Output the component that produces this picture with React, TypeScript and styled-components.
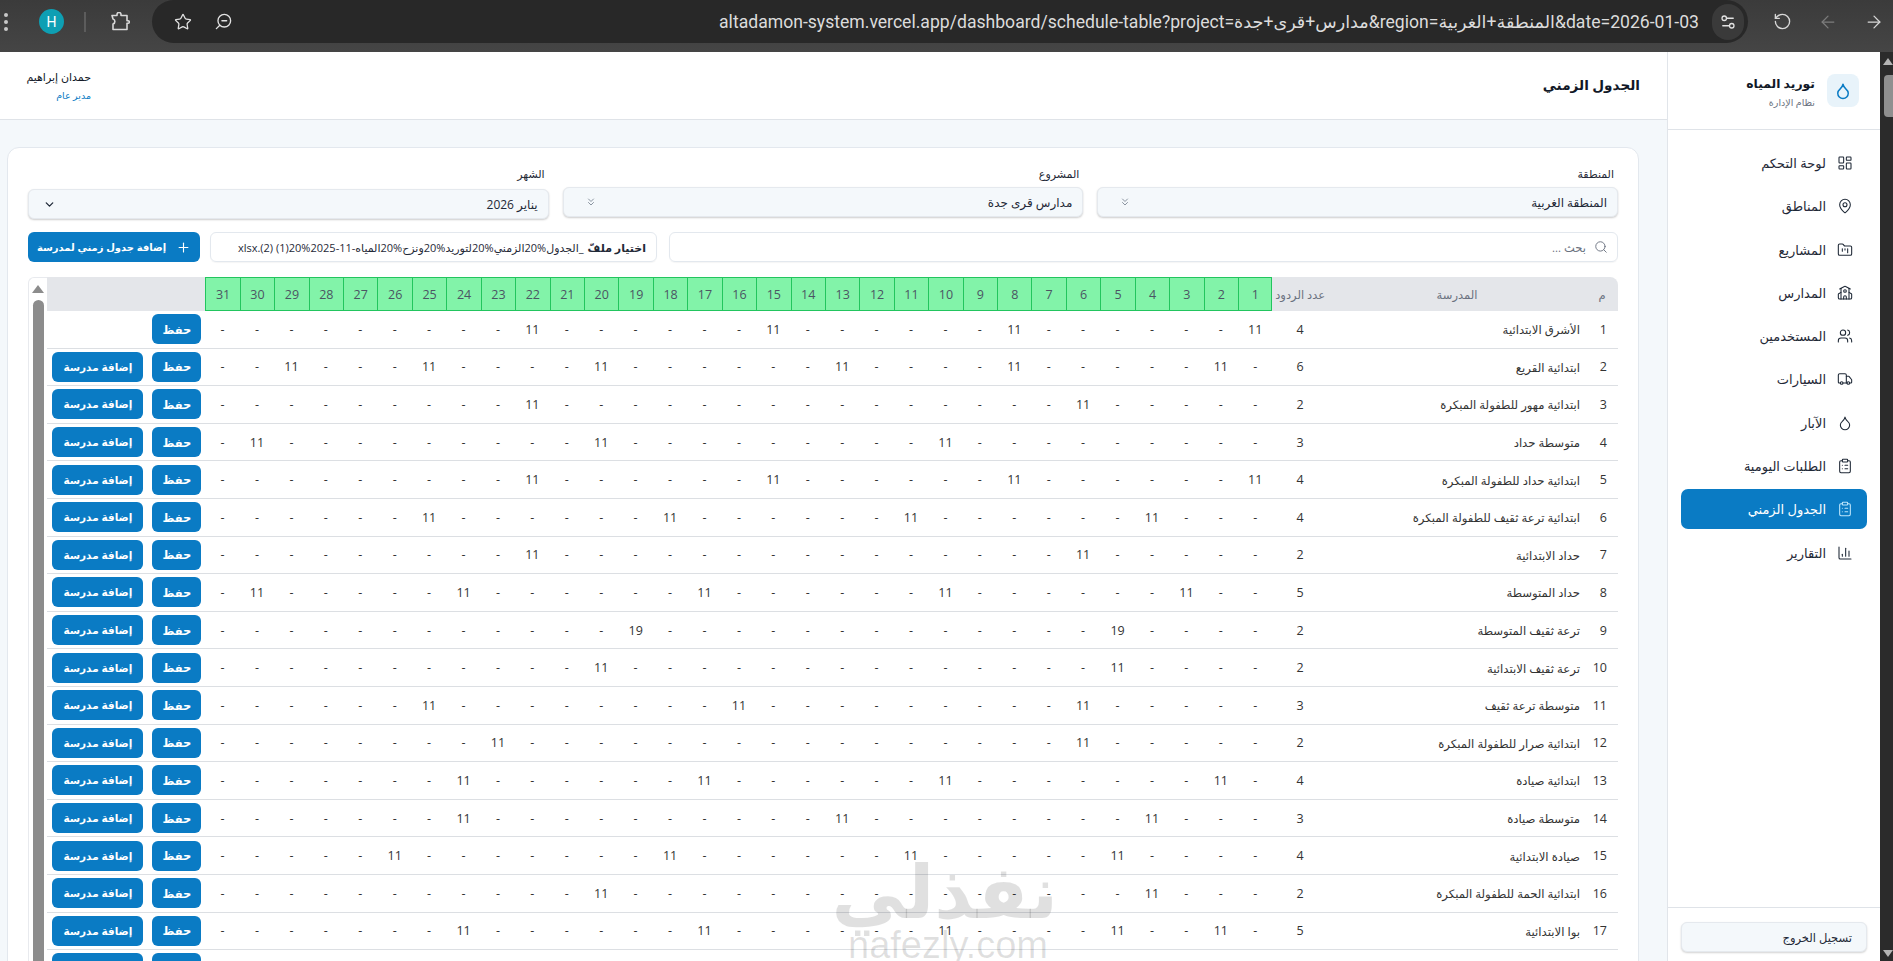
import * as React from 'react'
import styled, { createGlobalStyle } from 'styled-components'
import {
  ArrowLeft,
  ArrowRight,
  ChartColumn,
  ChevronDown,
  ChevronsDown,
  ClipboardList,
  Droplet,
  FolderKanban,
  LayoutDashboard,
  MapPin,
  Plus,
  RotateCcw,
  School,
  Search,
  Settings2,
  Star,
  Truck,
  Users,
  ZoomOut,
} from 'lucide-react'

const URL_TEXT =
  'altadamon-system.vercel.app/dashboard/schedule-table?project=مدارس+قرى+جدة&region=المنطقة+الغربية&date=2026-01-03'

const NAV = [
  { label: 'لوحة التحكم', icon: LayoutDashboard },
  { label: 'المناطق', icon: MapPin },
  { label: 'المشاريع', icon: FolderKanban },
  { label: 'المدارس', icon: School },
  { label: 'المستخدمين', icon: Users },
  { label: 'السيارات', icon: Truck },
  { label: 'الآبار', icon: Droplet },
  { label: 'الطلبات اليومية', icon: ClipboardList },
  { label: 'الجدول الزمني', icon: ClipboardList, active: true },
  { label: 'التقارير', icon: ChartColumn },
]

const DAYS = Array.from({ length: 31 }, (_, i) => i + 1)

const ROWS: { name: string; days: Record<number, number> }[] = [
  { name: 'الأشرق الابتدائية', days: { 1: 11, 8: 11, 15: 11, 22: 11 } },
  { name: 'ابتدائية القريع', days: { 2: 11, 8: 11, 13: 11, 20: 11, 25: 11, 29: 11 } },
  { name: 'ابتدائية مهور للطفولة المبكرة', days: { 6: 11, 22: 11 } },
  { name: 'متوسطة حداد', days: { 10: 11, 20: 11, 30: 11 } },
  { name: 'ابتدائية حداد للطفولة المبكرة', days: { 1: 11, 8: 11, 15: 11, 22: 11 } },
  { name: 'ابتدائية ترعة ثقيف للطفولة المبكرة', days: { 4: 11, 11: 11, 18: 11, 25: 11 } },
  { name: 'حداد الابتدائية', days: { 6: 11, 22: 11 } },
  { name: 'حداد المتوسطة', days: { 3: 11, 10: 11, 17: 11, 24: 11, 30: 11 } },
  { name: 'ترعة ثقيف المتوسطة', days: { 5: 19, 19: 19 } },
  { name: 'ترعة ثقيف الابتدائية', days: { 5: 11, 20: 11 } },
  { name: 'متوسطة ترعة ثقيف', days: { 6: 11, 16: 11, 25: 11 } },
  { name: 'ابتدائية صرار للطفولة المبكرة', days: { 6: 11, 23: 11 } },
  { name: 'ابتدائية صيادة', days: { 2: 11, 10: 11, 17: 11, 24: 11 } },
  { name: 'متوسطة صيادة', days: { 4: 11, 13: 11, 24: 11 } },
  { name: 'صيادة الابتدائية', days: { 5: 11, 11: 11, 18: 11, 26: 11 } },
  { name: 'ابتدائية الحمة للطفولة المبكرة', days: { 4: 11, 20: 11 } },
  { name: 'بوا الابتدائية', days: { 2: 11, 5: 11, 10: 11, 17: 11, 24: 11 } },
  { name: '', days: {} },
]

const GlobalStyle = createGlobalStyle`
  html, body {
    margin: 0;
    height: 100%;
    overflow: hidden;
    background: #f4f8fb;
  }
  * {
    box-sizing: border-box;
  }
  body {
    font-family: 'Open Sans', 'DejaVu Sans', sans-serif;
    color: #1f2937;
  }
`

const Screen = styled.div`
  height: 961px;
  display: flex;
  flex-direction: column;
  position: relative;
  overflow: hidden;
`

/* browser chrome */

const BrowserBar = styled.div`
  height: 52px;
  flex: none;
  direction: ltr;
  display: flex;
  align-items: flex-start;
  background: linear-gradient(#3b3b3b, #454545);
  color: #d8d8d8;
`

const ChromeLeft = styled.div`
  width: 152px;
  height: 43px;
  flex: none;
  display: flex;
  align-items: center;
`

const MenuDots = styled.div`
  width: 4px;
  margin-left: 4px;
  display: flex;
  flex-direction: column;
  gap: 3px;

  i {
    width: 4px;
    height: 4px;
    border-radius: 50%;
    background: #c8c8c8;
  }
`

const Avatar = styled.div`
  width: 25px;
  height: 25px;
  margin-left: 31px;
  border-radius: 50%;
  background: #0e9fb3;
  color: #fff;
  font: 400 14px Roboto, sans-serif;
  display: flex;
  align-items: center;
  justify-content: center;
`

const ChromeSep = styled.div`
  width: 2px;
  height: 20px;
  margin-left: 20px;
  background: #5c5c5c;
`

const PuzzleIcon = styled.svg`
  margin-left: 24px;
`

const Omnibox = styled.div`
  width: 1596px;
  height: 43px;
  flex: none;
  display: flex;
  align-items: center;
  background: #282828;
  border-radius: 22px;
  padding: 0 4px 0 22px;
`

const OmniIcons = styled.div`
  display: flex;
  align-items: center;
  gap: 22px;
  color: #e2e2e2;
`

const UrlText = styled.div`
  flex: 1;
  text-align: right;
  font: 400 17.6px Roboto, 'DejaVu Sans', sans-serif;
  color: #dcdcdc;
  white-space: nowrap;
  padding-right: 13px;
  direction: ltr;
`

const SiteButton = styled.div`
  width: 32px;
  height: 36px;
  border-radius: 18px;
  background: #3a3a3a;
  display: flex;
  align-items: center;
  justify-content: center;
  color: #e2e2e2;
`

const NavIcons = styled.div`
  flex: 1;
  height: 43px;
  display: flex;
  align-items: center;
  padding-left: 25px;
  gap: 26px;
`

/* page */

const Viewport = styled.div`
  flex: 1;
  min-height: 0;
  display: flex;
  direction: ltr;
`

const PageScrollbar = styled.div`
  width: 13px;
  flex: none;
  background: #2b2b2b;
  display: flex;
  flex-direction: column;
  align-items: flex-end;
  padding-top: 6px;
`

const ArrowUp = styled.div<{ $color: string }>`
  width: 0;
  height: 0;
  border-left: 5px solid transparent;
  border-right: 5px solid transparent;
  border-bottom: 7px solid ${(p) => p.$color};
`

const ArrowDown = styled(ArrowUp)`
  border-bottom: 0;
  border-top: 7px solid ${(p) => p.$color};
  margin-top: auto;
  margin-bottom: 4px;
`

const PageThumb = styled.div`
  width: 9px;
  height: 42px;
  margin-top: 10px;
  border-radius: 4px 0 0 4px;
  background: #8f8f8f;
`

const Page = styled.div`
  flex: 1;
  min-width: 0;
  display: flex;
  direction: rtl;
`

const Sidebar = styled.aside`
  width: 213px;
  flex: none;
  background: #fff;
  border-left: 1px solid #e1e5ea;
  display: flex;
  flex-direction: column;
`

const Brand = styled.div`
  height: 78px;
  flex: none;
  display: flex;
  align-items: flex-start;
  gap: 12px;
  padding: 22px 21px 0 0;
  border-bottom: 1px solid #dfe3e8;
`

const BrandMark = styled.div`
  width: 32px;
  height: 33px;
  border-radius: 8px;
  background: #e8f3fa;
  color: #0a7bc4;
  display: flex;
  align-items: center;
  justify-content: center;
`

const BrandTitle = styled.div`
  font-size: 12.4px;
  font-weight: 700;
  line-height: 20px;
  color: #111827;
  white-space: nowrap;
`

const BrandSub = styled.div`
  font-size: 9.5px;
  line-height: 13px;
  margin-top: 2px;
  color: #6b7280;
`

const Nav = styled.nav`
  flex: 1;
  padding: 13px 13px 0 13px;
  display: flex;
  flex-direction: column;
  gap: 3.3px;
`

const NavItem = styled.div<{ $active?: boolean }>`
  height: 40px;
  display: flex;
  align-items: center;
  gap: 11px;
  padding: 0 14px;
  border-radius: 7px;
  font-size: 13px;
  font-weight: 500;
  white-space: nowrap;
  background: ${(p) => (p.$active ? '#0a7bc4' : 'transparent')};
  color: ${(p) => (p.$active ? '#fff' : '#1f2937')};

  svg {
    color: ${(p) => (p.$active ? '#bfe6fb' : '#1f2937')};
  }
`

const SideFooter = styled.div`
  height: 54px;
  flex: none;
  padding: 14px 13px 0;
  border-top: 1px solid #dfe3e8;
`

const LogoutButton = styled.div`
  height: 30px;
  padding: 0 14px;
  display: flex;
  align-items: center;
  font-size: 11.5px;
  font-weight: 500;
  color: #1f2937;
  background: #f4f8fb;
  border: 1px solid #e5e9ee;
  border-radius: 6px;
  box-shadow: 0 1px 2px rgba(0, 0, 0, 0.18);
`

const Main = styled.main`
  flex: 1;
  min-width: 0;
  display: flex;
  flex-direction: column;
`

const TopBar = styled.header`
  height: 68px;
  flex: none;
  background: #fff;
  border-bottom: 1px solid #dfe3e8;
  display: flex;
  align-items: center;
  justify-content: space-between;
  padding: 0 27px 0 26px;
`

const PageTitle = styled.h1`
  margin: 0 0 2px;
  font-size: 13.6px;
  font-weight: 700;
  color: #111827;
`

const UserBlock = styled.div`
  width: 65px;
  white-space: nowrap;
`

const UserName = styled.div`
  font-size: 11px;
  font-weight: 500;
  line-height: 16px;
  color: #111827;
`

const UserRole = styled.div`
  font-size: 9.5px;
  line-height: 13px;
  margin-top: 4px;
  color: #0a7bc4;
`

const Content = styled.div`
  flex: 1;
  min-height: 0;
  padding: 27px 28px 0 7px;
`

const Card = styled.section`
  background: #fff;
  border: 1px solid #e3e8ee;
  border-radius: 12px;
  padding: 17px 20px 20px;
`

const Filters = styled.div`
  display: grid;
  grid-template-columns: repeat(3, 1fr);
  gap: 14px;
`

const Field = styled.div`
  min-width: 0;
`

const FieldLabel = styled.div`
  height: 20px;
  padding-right: 4px;
  font-size: 11px;
  font-weight: 500;
  line-height: 18px;
  color: #1f2937;
`

const SelectBox = styled.div<{ $native?: boolean }>`
  height: 30px;
  margin-top: ${(p) => (p.$native ? '4px' : '2px')};
  padding: 0 10px 0 ${(p) => (p.$native ? '14px' : '21px')};
  display: flex;
  align-items: center;
  justify-content: space-between;
  font-size: 12px;
  font-weight: 500;
  color: #1f2937;
  background: #f4f8fb;
  border: 1px solid #e5e9ee;
  border-radius: 6px;
  box-shadow: 0 1px 2px rgba(0, 0, 0, 0.2);

  svg {
    color: ${(p) => (p.$native ? '#1f2937' : '#8a94a0')};
  }
`

const Toolbar = styled.div`
  margin-top: 13px;
  display: flex;
  height: 30px;
`

const SearchBox = styled.div`
  flex: 1;
  margin-left: 12px;
  display: flex;
  align-items: center;
  gap: 8px;
  padding: 0 9px;
  border: 1px solid #e3e8ee;
  border-radius: 6px;
  box-shadow: 0 1px 1px rgba(0, 0, 0, 0.04);
  font-size: 11.5px;
  color: #6b7280;

  svg {
    color: #6b7280;
  }
`

const FileBox = styled.div`
  width: 447px;
  flex: none;
  margin-left: 10px;
  display: flex;
  align-items: center;
  gap: 4px;
  padding: 0 10px;
  border: 1px solid #e3e8ee;
  border-radius: 6px;
  box-shadow: 0 1px 1px rgba(0, 0, 0, 0.04);
  font-size: 11px;
  white-space: nowrap;
  overflow: hidden;
  color: #1f2937;
`

const FileButton = styled.span`
  font-weight: 700;
`

const PrimaryButton = styled.div`
  flex: none;
  background: #0a7bc4;
  color: #fff;
  font-size: 10.5px;
  font-weight: 700;
  border-radius: 6px;
  display: flex;
  align-items: center;
  justify-content: center;
  white-space: nowrap;
`

const AddScheduleButton = styled(PrimaryButton)`
  width: 172px;
  gap: 10px;
  font-size: 10px;
`

const SaveButton = styled(PrimaryButton)`
  width: 49px;
  height: 30px;
  font-size: 11.5px;
`

const AddSchoolButton = styled(PrimaryButton)`
  width: 91px;
  height: 30px;
`

const TableFrame = styled.div`
  margin-top: 15px;
  display: flex;
  align-items: flex-start;
  direction: ltr;
  border-radius: 8px 8px 0 0;
`

const TableScrollbar = styled.div`
  width: 19px;
  flex: none;
  border: 1px solid #e8eaee;
  border-right: 0;
  border-bottom: 0;
  border-radius: 6px 0 0 0;
  padding: 7px 0 0 4px;
  display: flex;
  flex-direction: column;
  align-items: center;
`

const TableArrow = styled.div`
  width: 0;
  height: 0;
  margin-right: 4px;
  border-left: 6px solid transparent;
  border-right: 6px solid transparent;
  border-bottom: 8px solid #8c8c8c;
`

const TableThumb = styled.div`
  width: 11px;
  height: 700px;
  margin: 7px 4px 0 0;
  border-radius: 6px;
  background: #8c8c8c;
`

const ScheduleTable = styled.table`
  width: 1571px;
  flex: none;
  direction: rtl;
  table-layout: fixed;
  border-collapse: separate;
  border-spacing: 0;
  font-size: 12.5px;
  color: #333;
`

const HeadCell = styled.th`
  height: 34px;
  padding: 0;
  background: #e4e6ea;
  color: #6b7280;
  font-size: 11.5px;
  font-weight: 400;
  text-align: center;
  white-space: nowrap;

  &:first-child {
    border-top-right-radius: 8px;
  }
`

const DayHead = styled.th`
  height: 34px;
  padding: 0;
  background: #82f3a9;
  border: 1px solid #22c55e;
  border-right-width: 0;
  color: #4b5563;
  font-size: 12.5px;
  font-weight: 400;
  text-align: center;

  &[data-first='true'] {
    border-right-width: 1px;
  }
`

const Cell = styled.td`
  height: 37.6px;
  padding: 0;
  border-bottom: 1px solid #dcdfe3;
  text-align: center;
`

const IndexCell = styled(Cell)`
  text-align: right;
  padding-right: 11px;
`

const NameCell = styled(Cell)`
  text-align: right;
  padding-right: 6px;
  font-size: 11.7px;
  white-space: nowrap;
`

const Actions = styled.div`
  display: flex;
  gap: 9px;
  padding-right: 4px;
`

const Watermark = styled.div`
  position: absolute;
  left: 838px;
  top: 844px;
  width: 220px;
  text-align: center;
  direction: rtl;
  color: rgba(0, 0, 0, 0.12);
  pointer-events: none;
`

const WatermarkArabic = styled.div`
  font-size: 74px;
  font-weight: 700;
  line-height: 92px;
  white-space: nowrap;
`

const WatermarkLatin = styled.div`
  direction: ltr;
  margin-top: -12px;
  font: 400 38px 'Liberation Sans', sans-serif;
  white-space: nowrap;
`

export default function App() {
  return (
    <Screen>
      <GlobalStyle />
      <BrowserBar>
        <ChromeLeft>
          <MenuDots>
            <i />
            <i />
            <i />
          </MenuDots>
          <Avatar>H</Avatar>
          <ChromeSep />
          <PuzzleIcon width="20" height="20" viewBox="0 0 20 20" fill="none" stroke="#d8d8d8" strokeWidth="1.6" strokeLinejoin="round">
            <path d="M2 3.5h5v-1a2 2 0 0 1 4 0v1h6v5.2h1a1.3 1.3 0 0 1 0 2.6h-1v6.2H3v-5.6a2.6 2.6 0 0 0 0-5 L2 3.5z" />
          </PuzzleIcon>
        </ChromeLeft>
        <Omnibox>
          <OmniIcons>
            <Star size={18} strokeWidth={1.7} />
            <ZoomOut size={19} strokeWidth={1.7} style={{ transform: 'scaleX(-1)' }} />
          </OmniIcons>
          <UrlText>{URL_TEXT}</UrlText>
          <SiteButton>
            <Settings2 size={18} strokeWidth={1.7} />
          </SiteButton>
        </Omnibox>
        <NavIcons>
          <RotateCcw size={19} strokeWidth={1.7} />
          <ArrowLeft size={20} strokeWidth={1.5} color="#7d7d7d" />
          <ArrowRight size={20} strokeWidth={1.5} />
        </NavIcons>
      </BrowserBar>

      <Viewport>
        <Page>
          <Sidebar>
            <Brand>
              <BrandMark>
                <Droplet size={18} strokeWidth={2} />
              </BrandMark>
              <div>
                <BrandTitle>توريد المياه</BrandTitle>
                <BrandSub>نظام الإدارة</BrandSub>
              </div>
            </Brand>
            <Nav>
              {NAV.map(({ label, icon: Icon, active }) => (
                <NavItem key={label} $active={active}>
                  <Icon size={16} strokeWidth={1.6} />
                  {label}
                </NavItem>
              ))}
            </Nav>
            <SideFooter>
              <LogoutButton>تسجيل الخروج</LogoutButton>
            </SideFooter>
          </Sidebar>

          <Main>
            <TopBar>
              <PageTitle>الجدول الزمني</PageTitle>
              <UserBlock>
                <UserName>حمدان إبراهيم</UserName>
                <UserRole>مدير عام</UserRole>
              </UserBlock>
            </TopBar>
            <Content>
              <Card>
                <Filters>
                  <Field>
                    <FieldLabel>المنطقة</FieldLabel>
                    <SelectBox>
                      المنطقة الغربية
                      <ChevronsDown size={12} />
                    </SelectBox>
                  </Field>
                  <Field>
                    <FieldLabel>المشروع</FieldLabel>
                    <SelectBox>
                      مدارس قرى جدة
                      <ChevronsDown size={12} />
                    </SelectBox>
                  </Field>
                  <Field>
                    <FieldLabel>الشهر</FieldLabel>
                    <SelectBox $native>
                      يناير 2026
                      <ChevronDown size={13} strokeWidth={2.4} />
                    </SelectBox>
                  </Field>
                </Filters>

                <Toolbar>
                  <SearchBox>
                    <Search size={14} strokeWidth={1.6} />
                    بحث ...
                  </SearchBox>
                  <FileBox>
                    <FileButton>اختيار ملفّ</FileButton>
                    <span>_الجدول%20الزمني%20لتوريد%20ونزح%20المياه-11-2025%20(1) (2).xlsx</span>
                  </FileBox>
                  <AddScheduleButton>
                    <Plus size={15} strokeWidth={1.8} />
                    إضافة جدول زمني لمدرسة
                  </AddScheduleButton>
                </Toolbar>

                <TableFrame>
                  <TableScrollbar>
                    <TableArrow />
                    <TableThumb />
                  </TableScrollbar>
                  <ScheduleTable>
                    <colgroup>
                      <col style={{ width: 32 }} />
                      <col style={{ width: 258 }} />
                      <col style={{ width: 55.5 }} />
                      {DAYS.map((d) => (
                        <col key={d} style={{ width: 34.43 }} />
                      ))}
                      <col style={{ width: 158 }} />
                    </colgroup>
                    <thead>
                      <tr>
                        <HeadCell>م</HeadCell>
                        <HeadCell>المدرسة</HeadCell>
                        <HeadCell>عدد الردود</HeadCell>
                        {DAYS.map((d) => (
                          <DayHead key={d} data-first={d === 1}>
                            {d}
                          </DayHead>
                        ))}
                        <HeadCell />
                      </tr>
                    </thead>
                    <tbody>
                      {ROWS.map((row, i) => (
                        <tr key={i}>
                          <IndexCell>{i + 1}</IndexCell>
                          <NameCell>{row.name}</NameCell>
                          <Cell>{Object.keys(row.days).length}</Cell>
                          {DAYS.map((d) => (
                            <Cell key={d}>{row.days[d] ?? '-'}</Cell>
                          ))}
                          <Cell>
                            <Actions>
                              <SaveButton>حفظ</SaveButton>
                              {i > 0 && <AddSchoolButton>إضافة مدرسة</AddSchoolButton>}
                            </Actions>
                          </Cell>
                        </tr>
                      ))}
                    </tbody>
                  </ScheduleTable>
                </TableFrame>
              </Card>
            </Content>
          </Main>
        </Page>
        <PageScrollbar>
          <ArrowUp $color="#b5b5b5" />
          <PageThumb />
          <ArrowDown $color="#b5b5b5" />
        </PageScrollbar>
      </Viewport>

      <Watermark>
        <WatermarkArabic>نفذلي</WatermarkArabic>
        <WatermarkLatin>nafezly.com</WatermarkLatin>
      </Watermark>
    </Screen>
  )
}
